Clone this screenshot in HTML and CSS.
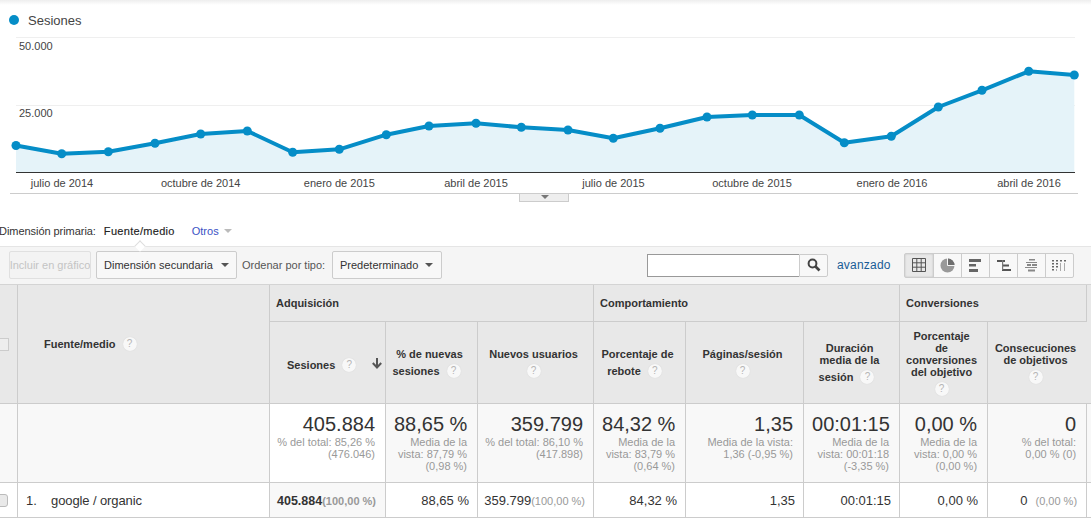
FILE: index.html
```html
<!DOCTYPE html>
<html lang="es">
<head>
<meta charset="utf-8">
<title>Sesiones</title>
<link rel="stylesheet" href="styles.css">
</head>
<body>
<div class="page">
  <div class="topshadow"></div>
  <svg class="chart" width="1091" height="199" viewBox="0 5 1091 199">
    <circle class="dot" cx="14" cy="20" r="5"/>
    <text class="legend" x="28" y="24.500">Sesiones</text>
    <line class="grid" x1="16" x2="1075" y1="37.500" y2="37.500"/>
    <line class="grid" x1="16" x2="1075" y1="105.500" y2="105.500"/>
    <text class="lab" x="19" y="50">50.000</text>
    <text class="lab" x="19" y="117">25.000</text>
    <polygon class="area" points="16,172 16,145.500 61.700,153.700 108.300,151.700 155,143.300 200.700,134 247.300,131 292.700,152.300 339.300,149.300 386.300,134.700 429,126 476,123.300 521.300,127.300 568,130 613.300,138.300 660,128.300 707,117 752.300,115 799.300,115 844.300,142.700 891.300,136.300 938.300,107 982,90.300 1028.700,71.300 1074.300,75 1074.300,172"/>
    <polyline class="trend" points="16,145.500 61.700,153.700 108.300,151.700 155,143.300 200.700,134 247.300,131 292.700,152.300 339.300,149.300 386.300,134.700 429,126 476,123.300 521.300,127.300 568,130 613.300,138.300 660,128.300 707,117 752.300,115 799.300,115 844.300,142.700 891.300,136.300 938.300,107 982,90.300 1028.700,71.300 1074.300,75"/>
    <g class="dots">
      <circle cx="16" cy="145.500" r="4.500"/><circle cx="61.700" cy="153.700" r="4.500"/><circle cx="108.300" cy="151.700" r="4.500"/><circle cx="155" cy="143.300" r="4.500"/><circle cx="200.700" cy="134" r="4.500"/><circle cx="247.300" cy="131" r="4.500"/><circle cx="292.700" cy="152.300" r="4.500"/><circle cx="339.300" cy="149.300" r="4.500"/><circle cx="386.300" cy="134.700" r="4.500"/><circle cx="429" cy="126" r="4.500"/><circle cx="476" cy="123.300" r="4.500"/><circle cx="521.300" cy="127.300" r="4.500"/><circle cx="568" cy="130" r="4.500"/><circle cx="613.300" cy="138.300" r="4.500"/><circle cx="660" cy="128.300" r="4.500"/><circle cx="707" cy="117" r="4.500"/><circle cx="752.300" cy="115" r="4.500"/><circle cx="799.300" cy="115" r="4.500"/><circle cx="844.300" cy="142.700" r="4.500"/><circle cx="891.300" cy="136.300" r="4.500"/><circle cx="938.300" cy="107" r="4.500"/><circle cx="982" cy="90.300" r="4.500"/><circle cx="1028.700" cy="71.300" r="4.500"/><circle cx="1074.300" cy="75" r="4.500"/>
    </g>
    <line class="axis" x1="16" x2="1075" y1="172.500" y2="172.500"/>
    <g class="xlabs">
      <text x="62" y="187">julio de 2014</text>
      <text x="200.700" y="187">octubre de 2014</text>
      <text x="339.300" y="187">enero de 2015</text>
      <text x="476" y="187">abril de 2015</text>
      <text x="613.500" y="187">julio de 2015</text>
      <text x="752" y="187">octubre de 2015</text>
      <text x="892" y="187">enero de 2016</text>
      <text x="1029" y="187">abril de 2016</text>
    </g>
    <line class="rule" x1="10" x2="1078" y1="193.500" y2="193.500"/>
    <rect class="handle" x="519.500" y="193.500" width="49" height="8"/>
    <polygon class="handle-arrow" points="541,195 549,195 545,199"/>
  </svg>

  <nav class="tabs">
    <span class="tabs-label">Dimensión primaria:</span>
    <span class="tab-active">Fuente/medio</span>
    <span class="tab-link">Otros</span>
    <span class="tab-caret"></span>
  </nav>

  <div class="toolbar">
    <button class="btn btn-disabled">Incluir en gráfico</button>
    <button class="btn btn-dim">Dimensión secundaria<span class="caret"></span></button>
    <span class="order-label">Ordenar por tipo:</span>
    <button class="btn btn-order">Predeterminado<span class="caret"></span></button>
    <div class="search">
      <span class="search-input"></span>
      <span class="search-btn">
        <svg width="14" height="14" viewBox="0 0 14 14"><circle cx="5.500" cy="5.500" r="3.900" fill="none" stroke="#444" stroke-width="2"/><line x1="8.500" y1="8.500" x2="12.500" y2="12.500" stroke="#444" stroke-width="2.600"/></svg>
      </span>
    </div>
    <a class="advanced">avanzado</a>
    <div class="views">
      <span class="view view-on">
        <svg width="14" height="14" viewBox="0 0 14 14"><path d="M.5.5h13v13H.5zM4.800.5v13M9.200.5v13M.5 4.800h13M.5 9.200h13" fill="none" stroke="#555"/></svg>
      </span>
      <span class="view">
        <svg width="15" height="15" viewBox="0 0 15 15"><circle cx="7.500" cy="7.500" r="7" fill="#999"/><path d="M8 .500a7 7 0 0 1 6.500 6.500H8z" fill="#6e6e6e"/><path d="M7.500 0v7.500H15" fill="none" stroke="#f5f5f5"/></svg>
      </span>
      <span class="view">
        <svg width="13" height="13" viewBox="0 0 13 13"><path d="M0 0h12v3H0zM0 5h7v2.500H0zM0 10h9v3H0z" fill="#666"/></svg>
      </span>
      <span class="view">
        <svg width="14" height="13" viewBox="0 0 14 13"><path d="M0 1h8v2H0zM5 5.500h7v2H5zM5 10h9v2H5z" fill="#555"/><path d="M5 1h1.200v10H5z" fill="#777"/></svg>
      </span>
      <span class="view">
        <svg width="13" height="13" viewBox="0 0 13 13"><path d="M4 0h6v1.500H4zM1 3h11v1H1zM2 5h4v2H2zM7 5h5v2H7zM0 8h12v1H0zM3 10.500h7v2H3z" fill="#888"/></svg>
      </span>
      <span class="view">
        <svg width="15" height="11" viewBox="0 0 15 11"><path d="M0 0h2v1.500H0zM0 3h2v1.500H0zM0 6h2v1.500H0zM0 9h2v1.500H0zM4 0h2v1.500H4zM4 3h2v1.500H4zM4 6h2v1.500H4zM8 0h2v1.500H8zM12 0h2v1.500h-2z" fill="#666"/><path d="M4 9h1v2H4zM8 3h1v8H8zM12 3h1v8h-1z" fill="#aaa"/></svg>
      </span>
    </div>
  </div>

  <table class="report">
    <colgroup>
      <col class="c-check"><col class="c-dim"><col class="c-116"><col class="c-92"><col class="c-116"><col class="c-92"><col class="c-118"><col class="c-96"><col class="c-88"><col class="c-99"><col class="c-end">
    </colgroup>
    <thead>
      <tr class="groups">
        <th class="th-blank" rowspan="2"><span class="check check-head"></span></th>
        <th class="th-dim" rowspan="2">Fuente/medio <span class="help">?</span></th>
        <th class="group" colspan="3">Adquisición</th>
        <th class="group" colspan="3">Comportamiento</th>
        <th class="group" colspan="2">Conversiones</th>
        <th class="th-end" rowspan="2"></th>
      </tr>
      <tr class="metrics">
        <th class="sorted">Sesiones <span class="help">?</span><svg class="sort-arrow" width="10" height="12" viewBox="0 0 10 12"><path d="M5 1v9M.8 6L5 10.500 9.200 6" fill="none" stroke="#555" stroke-width="2"/></svg></th>
        <th>% de nuevas sesiones <span class="help help-tail">?</span></th>
        <th>Nuevos usuarios<br><span class="help help-solo">?</span></th>
        <th>Porcentaje de rebote <span class="help help-tail">?</span></th>
        <th>Páginas/sesión<br><span class="help help-solo">?</span></th>
        <th>Duración media de la sesión <span class="help help-tail">?</span></th>
        <th>Porcentaje de conversiones del objetivo<br><span class="help help-solo">?</span></th>
        <th>Consecuciones de objetivos<br><span class="help help-solo">?</span></th>
      </tr>
    </thead>
    <tbody>
      <tr class="totals">
        <td class="shade"></td>
        <td class="shade"></td>
        <td class="total total-wide"><div class="big">405.884</div><div class="sub">% del total: 85,26 % (476.046)</div></td>
        <td class="total shade"><div class="big">88,65 %</div><div class="sub">Media de la vista: 87,79 % (0,98 %)</div></td>
        <td class="total total-wide shade"><div class="big">359.799</div><div class="sub">% del total: 86,10 % (417.898)</div></td>
        <td class="total shade"><div class="big">84,32 %</div><div class="sub">Media de la vista: 83,79 % (0,64 %)</div></td>
        <td class="total shade"><div class="big">1,35</div><div class="sub">Media de la vista: 1,36 (-0,95 %)</div></td>
        <td class="total shade"><div class="big">00:01:15</div><div class="sub">Media de la vista: 00:01:18 (-3,35 %)</div></td>
        <td class="total shade"><div class="big">0,00 %</div><div class="sub">Media de la vista: 0,00 % (0,00 %)</div></td>
        <td class="total total-narrow shade"><div class="big">0</div><div class="sub">% del total: 0,00 % (0)</div></td>
        <td class="shade"></td>
      </tr>
      <tr class="row">
        <td><span class="check"></span></td>
        <td class="name"><span class="idx">1.</span>google / organic</td>
        <td class="val val-loose shade"><b>405.884</b><span class="pct-bold">(100,00 %)</span></td>
        <td class="val">88,65 %</td>
        <td class="val">359.799<span class="pct">(100,00 %)</span></td>
        <td class="val">84,32 %</td>
        <td class="val">1,35</td>
        <td class="val">00:01:15</td>
        <td class="val val-loose">0,00 %</td>
        <td class="val val-loose">0<span class="pct pct-gap">(0,00 %)</span></td>
        <td></td>
      </tr>
    </tbody>
  </table>
</div>
</body>
</html>
```

FILE: styles.css
```css
* { box-sizing: border-box; }
html, body { margin: 0; padding: 0; background: #fff; }
body { font-family: "Liberation Sans", Arial, sans-serif; color: #333; overflow: hidden; }
.page { width: 1091px; height: 523px; overflow: hidden; }

.topshadow { height: 5px; background: linear-gradient(to bottom, #eeeeee, #fff); }
.chart { display: block; }
.dot, .dots circle { fill: #058dc7; }
.legend { font-size: 13px; fill: #444; }
.lab { font-size: 11px; fill: #444; }
.grid { stroke: #efefef; stroke-width: 1; }
.area { fill: #e5f3f9; }
.trend { fill: none; stroke: #058dc7; stroke-width: 4; stroke-linejoin: round; }
.axis { stroke: #333; stroke-width: 1; }
.xlabs text { font-size: 11px; fill: #444; text-anchor: middle; }
.rule { stroke: #ccc; stroke-width: 1; }
.handle { fill: #eee; stroke: #ccc; stroke-width: 1; }
.handle-arrow { fill: #777; }

.tabs { display: flex; align-items: center; height: 43px; padding-top: 11px; font-size: 11px; margin-left: -1px; position: relative; border-bottom: 1px solid #e5e5e5; }
.tabs::after { content: ""; position: absolute; left: 137px; bottom: -4px; width: 7px; height: 7px; background: #fff; border-left: 1px solid #ddd; border-top: 1px solid #ddd; transform: rotate(45deg); }
.tabs-label { color: #333; letter-spacing: -.05px; }
.tab-active { margin-left: 8px; color: #222; letter-spacing: .3px; -webkit-text-stroke: .15px #222; }
.tab-link { margin-left: 17px; color: #3b52c4; }
.tab-caret { margin-left: 5px; margin-top: 1px; border: 4px solid transparent; border-top: 4px solid #bbb; border-bottom: 0; }

.toolbar { display: flex; align-items: center; height: 38px; padding: 0 0 1px 9px; background: #f5f5f5; border-bottom: 1px solid #d4d4d4; font-size: 11px; }
.btn { height: 28px; padding: 0; font: 11px "Liberation Sans", Arial, sans-serif; background: #f8f8f8; border: 1px solid #ccc; border-radius: 2px; color: #333; display: flex; align-items: center; justify-content: space-between; }
.btn-disabled { width: 82px; justify-content: center; color: #c4c4c4; background: #f3f3f3; border-color: #e0e0e0; white-space: nowrap; overflow: hidden; }
.btn-dim { width: 141px; margin-left: 5px; padding: 0 7px 0 7px; }
.btn-order { width: 110px; padding: 0 8px 0 7px; }
.caret { border: 4px solid transparent; border-top: 4px solid #555; border-bottom: 0; }
.order-label { margin-left: 5px; width: 90px; color: #555; }
.search { display: flex; margin-left: 205px; height: 23px; }
.search-input { width: 152px; background: #fff; border: 1px solid #999; border-right: 0; }
.search-btn { width: 29px; display: flex; align-items: center; justify-content: center; background: #f8f8f8; border: 1px solid #ccc; border-radius: 0 2px 2px 0; }
.advanced { margin-left: 9px; width: 67px; color: #1a5c96; font-size: 12px; letter-spacing: .2px; }
.views { display: flex; height: 25px; border: 1px solid #ccc; border-radius: 2px; background: #f8f8f8; }
.view { width: 28px; display: flex; align-items: center; justify-content: center; border-left: 1px solid #ccc; }
.view:first-child { border-left: 0; }
.view-on { background: #e8e8e8; box-shadow: inset 0 0 2px #bbb; }

.report { width: 1091px; table-layout: fixed; border-collapse: separate; border-spacing: 0; font-size: 11px; }
.c-check { width: 18px; } .c-dim { width: 252px; } .c-116 { width: 116px; } .c-92 { width: 92px; } .c-118 { width: 118px; } .c-96 { width: 96px; } .c-88 { width: 88px; } .c-99 { width: 99px; } .c-end { width: 4px; }

th, td { border-right: 1px solid #ccc; border-bottom: 1px solid #ccc; padding: 0; overflow: hidden; }
th:last-child, td:last-child { border-right: 0; }
thead th { background: #e8e8e8; color: #333; font-size: 11px; font-weight: bold; line-height: 12px; }
.groups { height: 37px; }
.metrics { height: 82px; }
.group { text-align: left; padding-left: 6px; }
.th-dim { text-align: left; padding: 0 0 4px 26px; }
.th-blank { text-align: left; }
.metrics th { padding: 0 10px 0 6px; text-align: center; vertical-align: middle; }
.metrics th.sorted { text-align: left; padding-left: 17px; position: relative; white-space: nowrap; }
.sort-arrow { position: absolute; right: 3px; top: 35px; }

.help { display: inline-block; overflow: hidden; width: 14px; height: 14px; margin: 4px 0 0 4px; border-radius: 50%; background: #f8f8f8; box-shadow: 0 0 1px #ccc; color: #b5b5b5; font-size: 10px; font-weight: normal; line-height: 14px; text-align: center; vertical-align: -3px; }
.help-solo { margin-left: 0; }
.help-tail { margin-right: 6px; }

.check { display: block; width: 13px; height: 13px; margin-left: -5px; background: #e9e9e9; border: 1px solid #bbb; border-radius: 3px; }
.check-head { margin-left: -4px; background: #eee; border-color: #ccc; border-radius: 0; }

.totals { height: 79px; }
.shade { background: #f8f8f8; }
.total { text-align: right; vertical-align: top; padding: 8px 10px 0 8px; }
.total-wide { padding-left: 0; }
.total-narrow { padding-left: 14px; }
.big { font-size: 20px; line-height: 24px; color: #333; white-space: nowrap; }
.sub { font-size: 11px; line-height: 12px; color: #999; }

.row { height: 35px; }
.row td { font-size: 13px; color: #333; }
.name { padding-left: 8px; letter-spacing: -.1px; }
.idx { display: inline-block; width: 25px; }
.val { text-align: right; padding-right: 8px; white-space: nowrap; }
.val-loose { padding-right: 9px; }
.val b { font-size: 12.500px; }
.pct { font-size: 11px; color: #999; }
.pct-bold { font-size: 11px; font-weight: bold; color: #999; }
.pct-gap { margin-left: 8px; }
```
